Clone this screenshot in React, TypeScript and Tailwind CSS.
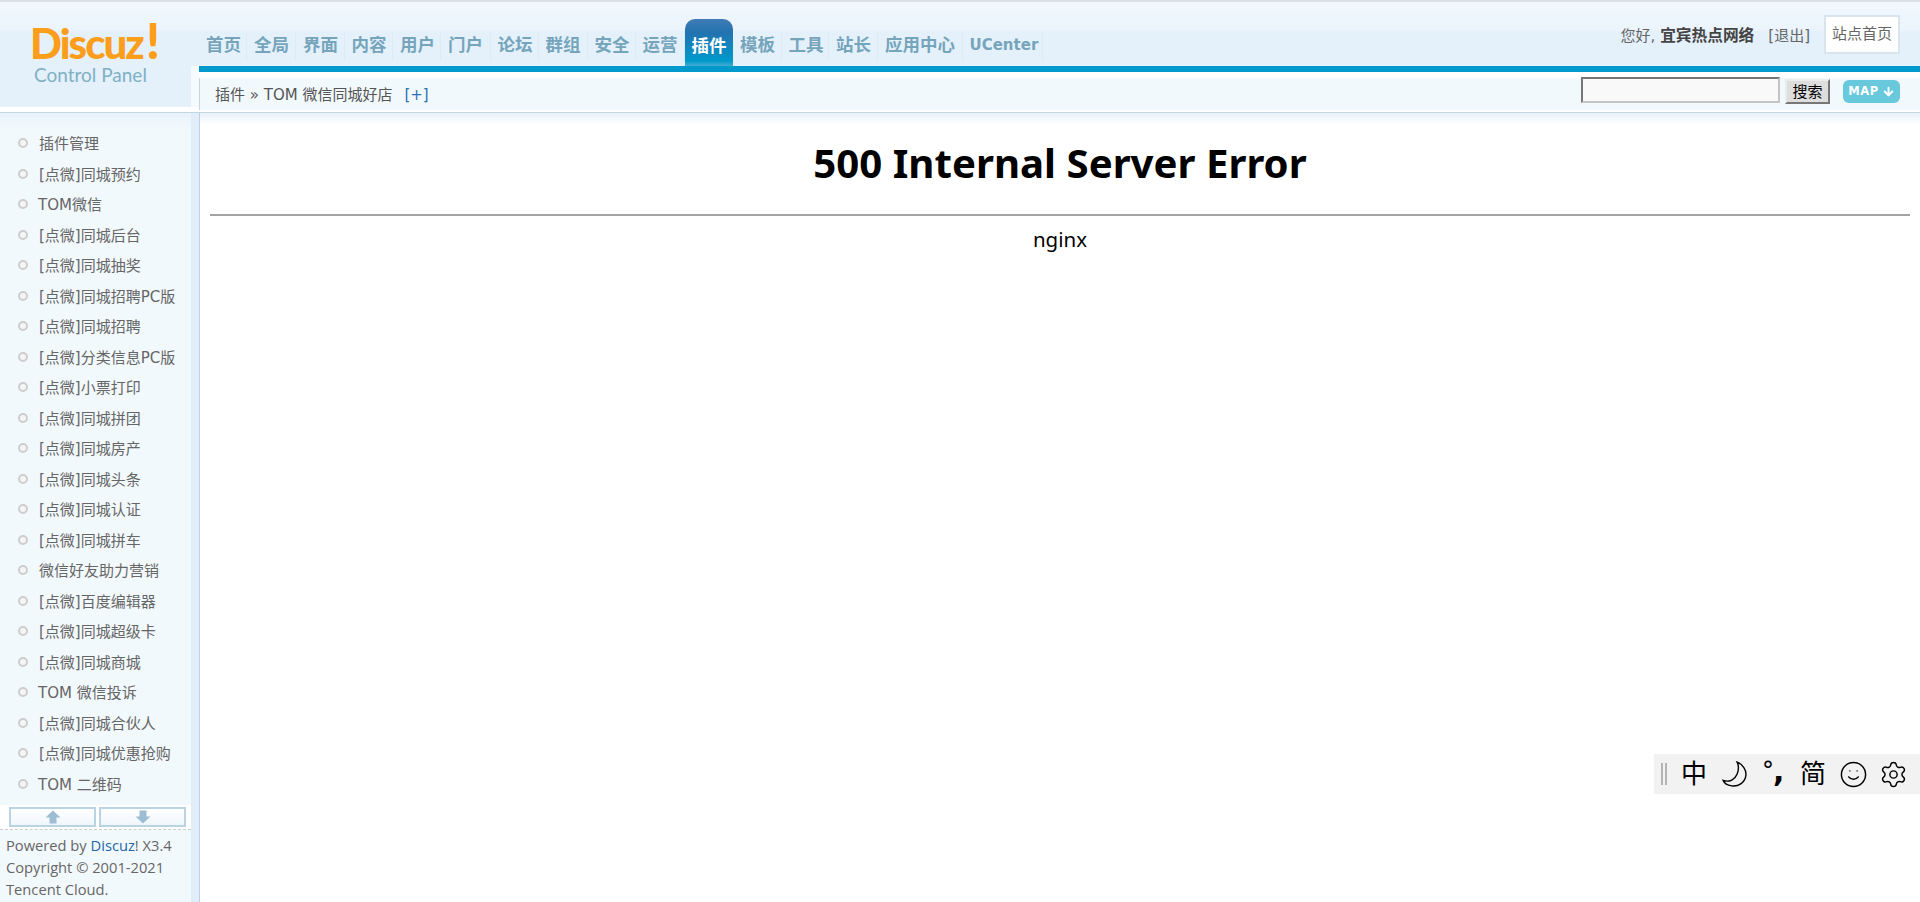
import { ArrowDown, Settings, Smile } from "lucide-react";

const navItems = [
	{ label: "首页", width: "w-[48px]" },
	{ label: "全局", width: "w-[49px]" },
	{ label: "界面", width: "w-[48.5px]" },
	{ label: "内容", width: "w-[48.5px]" },
	{ label: "用户", width: "w-[48px]" },
	{ label: "门户", width: "w-[49.5px]" },
	{ label: "论坛", width: "w-[48px]" },
	{ label: "群组", width: "w-[49px]" },
	{ label: "安全", width: "w-[48px]" },
	{ label: "运营", width: "w-[49.5px]" },
	{ label: "插件", width: "w-[48px]", active: true },
	{ label: "模板", width: "w-[48.5px]" },
	{ label: "工具", width: "w-[47.5px]" },
	{ label: "站长", width: "w-[49px]" },
	{ label: "应用中心", width: "w-[84.5px]" },
	{ label: "UCenter", width: "w-[80.5px]", latin: true },
];

const menuItems = [
	"插件管理",
	"[点微]同城预约",
	"TOM微信",
	"[点微]同城后台",
	"[点微]同城抽奖",
	"[点微]同城招聘PC版",
	"[点微]同城招聘",
	"[点微]分类信息PC版",
	"[点微]小票打印",
	"[点微]同城拼团",
	"[点微]同城房产",
	"[点微]同城头条",
	"[点微]同城认证",
	"[点微]同城拼车",
	"微信好友助力营销",
	"[点微]百度编辑器",
	"[点微]同城超级卡",
	"[点微]同城商城",
	"TOM 微信投诉",
	"[点微]同城合伙人",
	"[点微]同城优惠抢购",
	"TOM 二维码",
];

const BlockArrow = ({ down }: { down?: boolean }) => (
	<svg width="16" height="14" viewBox="0 0 16 14" className={down ? "rotate-180" : ""}>
		<path d="M8 0.5 L15.5 7.5 L11.5 7.5 L11.5 13.5 L4.5 13.5 L4.5 7.5 L0.5 7.5 Z" fill="#9dbdd3" />
	</svg>
);

const Header = () => (
	<header className="h-[113px] shrink-0 flex border-t-2 border-[#dadfe3] bg-[linear-gradient(#f1f7fd,#ebf4fc_29px,#e4f1fb_29px,#e4f1fb)]">
		<div className="w-[199px] shrink-0 flex flex-col">
			<div className="h-[105px] flex">
				<div className="w-[191px] flex flex-col pl-[30px] pt-[20px]">
					<div className="h-[42px] flex items-center [font-family:'Lato',sans-serif] font-black text-[42px] leading-[42px] tracking-[-2px] text-[#fc9d1c]">
						Discuz<span className="text-[50px] leading-[42px] ml-[3px] -mt-[6px]">!</span>
					</div>
					<div className="pl-[4px] [font-family:'Lato',sans-serif] text-[19px] leading-[22px] text-[#7fb0c4]">
						Control Panel
					</div>
				</div>
				<div className="flex-1 flex flex-col">
					<div className="h-[64px]"></div>
					<div className="flex-1 bg-[#f4fafe]"></div>
				</div>
			</div>
			<div className="h-[5px] bg-white"></div>
			<div className="flex-1 border-b border-[#c3d7e3] bg-white"></div>
		</div>
		<div className="flex-1 flex flex-col min-w-0 border-b border-[#c3d7e3]">
			<div className="h-[64px] flex justify-between items-stretch">
				<nav className="flex items-stretch">
					{navItems.map((item) =>
						item.active ? (
							<div
								key={item.label}
								className={`${item.width} mt-[17px] rounded-t-[10px] bg-[linear-gradient(#407cb6,#2173b0_14px,#0099cc_42px,#46accf)] flex items-start justify-center pt-[16px] text-[17.5px] leading-[22px] font-bold text-white`}
							>
								{item.label}
							</div>
						) : (
							<div
								key={item.label}
								className={`${item.width} mt-[31px] mb-[5px] border-r border-[#dcebf5] flex items-start pl-[7px] pt-[1px] font-bold text-[#76a5bb] ${item.latin ? "text-[15px] leading-[22px]" : "text-[17.5px] leading-[22px]"}`}
							>
								{item.label}
							</div>
						)
					)}
				</nav>
				<div className="flex items-start pr-[20px] text-[15px] text-[#666]">
					<div className="mt-[24px] leading-[20px] mr-[14px] whitespace-nowrap">
						您好, <b className="text-[15.7px] text-[#444]">宜宾热点网络</b>
						<span className="ml-[14px]">[退出]</span>
					</div>
					<div className="mt-[13px] w-[76px] h-[39px] border-2 border-[#d8e4ee] bg-white flex items-center justify-center whitespace-nowrap">
						站点首页
					</div>
				</div>
			</div>
			<div className="h-[6px] bg-[#0099cc]"></div>
			<div className="h-[6px] bg-white"></div>
			<div className="h-[32px] bg-[#f2f9fd] border-l border-[#c3d7e3] flex items-center justify-between pl-[15px] pr-[20px]">
				<div className="text-[15px] text-[#555] mt-[2px] whitespace-nowrap">
					插件 » TOM 微信同城好店<span className="ml-[12px] text-[#2b6fb5]">[+]</span>
				</div>
				<div className="flex items-center pb-[5px]">
					<input className="w-[199px] h-[26px] -mt-[4px] border-2 border-t-[#767676] border-l-[#767676] border-r-[#c4c4c4] border-b-[#c4c4c4] bg-[#f9f9f9]" />
					<button className="w-[45px] h-[25px] ml-[5px] border-2 border-t-[#ececec] border-l-[#ececec] border-r-[#777] border-b-[#777] bg-[#dedede] text-[15px] leading-[20px] text-black">
						搜索
					</button>
					<div className="w-[57px] h-[23px] ml-[13px] rounded-[6px] bg-[#68c8dc] flex items-center justify-center gap-[3px] text-white font-bold text-[11.5px] tracking-[0.5px]">
						MAP
						<ArrowDown size={13} strokeWidth={3.5} />
					</div>
				</div>
			</div>
			<div className="h-[2px] bg-white"></div>
		</div>
	</header>
);

const Sidebar = () => (
	<aside className="w-[200px] shrink-0 flex border-r border-[#b9d3e2] bg-[#e1eefa]">
		<div className="w-[191px] bg-[#f2f9fd] flex flex-col">
			<div className="h-[16px] bg-[linear-gradient(#e8f2fa,#f2f9fd)]"></div>
			<ul className="flex flex-col">
				{menuItems.map((item) => (
					<li key={item} className="h-[30.5px] flex items-center text-[15px] text-[#666] whitespace-nowrap">
						<span className="ml-[18px] -mt-[2px] shrink-0 w-[10px] h-[10px] rounded-full border-2 border-[#cdcdcd] bg-[#f5f5f5]"></span>
						<span className={`${item.startsWith("TOM") ? "ml-[10px]" : "ml-[11px]"}`}>{item}</span>
					</li>
				))}
			</ul>
			<div className="mt-[5px] h-[25px] bg-white flex items-center gap-[3px] pl-[9px] pr-[5px] border-b border-dashed border-[#cccccc]">
				<button className="w-[87px] h-[20px] border-2 border-[#b9d3e2] bg-[linear-gradient(#ffffff,#eef6fb)] flex items-center justify-center">
					<BlockArrow />
				</button>
				<button className="w-[87px] h-[20px] border-2 border-[#b9d3e2] bg-[linear-gradient(#ffffff,#eef6fb)] flex items-center justify-center">
					<BlockArrow down />
				</button>
			</div>
			<div className="pl-[6px] pt-[4px] text-[14.7px] leading-[22px] text-[#666] [font-family:'Open_Sans',sans-serif]">
				<div>
					Powered by <span className="text-[#2366a8]">Discuz</span>! X3.4
				</div>
				<div>Copyright © 2001-2021</div>
				<div>Tencent Cloud.</div>
			</div>
		</div>
	</aside>
);

const ImeBar = () => (
	<div className="absolute right-0 top-[754px] w-[266px] h-[40px] bg-[#f2f2f2] flex items-center text-black">
		<div className="ml-[7px] w-[6px] h-[22px] border-x-2 border-[#b5b5b5]"></div>
		<span className="ml-[14px] w-[26px] text-[26px] leading-none">中</span>
		<svg className="ml-[14px]" width="28" height="28" viewBox="0 0 26 26" fill="none" stroke="black" strokeWidth="1.3">
			<path d="M15 2 C20 4 24 9 23 15 C22 21 16 25 10 24 C6 23.5 3 21.5 2 19 C8 21 13 18 15 13 C16.5 9 16.5 5 15 2 Z" />
		</svg>
		<span className="ml-[13px] w-[26px] flex items-start text-[24px] leading-none">
			<span className="-mt-[2px]">°</span>
			<span className="font-bold text-[30px] -ml-[1px] -mt-[4px]">,</span>
		</span>
		<span className="ml-[12px] w-[26px] text-[26px] leading-none">简</span>
		<Smile className="ml-[13px]" size={29} strokeWidth={1.2} />
		<Settings className="ml-[11px]" size={29} strokeWidth={1.2} />
	</div>
);

export default function App() {
	return (
		<div className="relative h-screen overflow-hidden flex flex-col bg-white [font-family:'DejaVu_Sans','Noto_Sans_CJK_SC',sans-serif]">
			<Header />
			<div className="flex-1 flex min-h-0">
				<Sidebar />
				<main className="flex-1 min-w-0 flex flex-col">
					<div className="h-[12px] bg-[linear-gradient(#e8f2fa,#ffffff)]"></div>
					<div className="px-[10px] pt-[13px] text-black [font-family:'Noto_Sans','Noto_Sans_CJK_SC',sans-serif]">
						<h1 className="text-center text-[40.2px] leading-[50px] font-bold">500 Internal Server Error</h1>
						<hr className="mt-[26px] border-t-2 border-[#a3a3a3]" />
						<p className="mt-[10px] text-center text-[20.5px] leading-[26px]">nginx</p>
					</div>
				</main>
			</div>
			<ImeBar />
		</div>
	);
}
